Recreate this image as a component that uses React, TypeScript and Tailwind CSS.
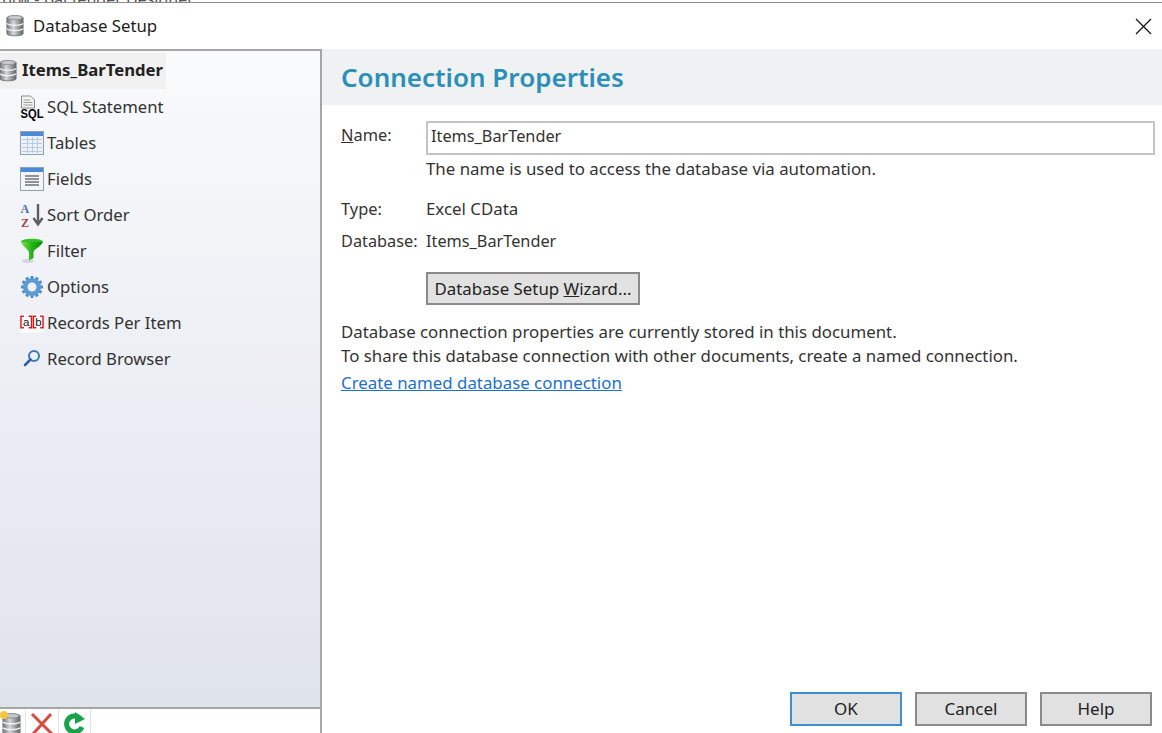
import { ReactNode } from "react";

function DbIcon({ size = 20 }: { size?: number }) {
  return (
    <svg width={size} height={size * 1.3} viewBox="0 0 20 26" preserveAspectRatio="none">
      <defs>
        <linearGradient id="db" x1="0" x2="1" y1="0" y2="0">
          <stop offset="0" stopColor="#6f7478" />
          <stop offset="0.4" stopColor="#d5d8da" />
          <stop offset="1" stopColor="#5f6468" />
        </linearGradient>
      </defs>
      <path d="M1 4c0-2.500 18-2.500 18 0v18c0 3-18 3-18 0z" fill="url(#db)" stroke="#74787c" />
      <ellipse cx="10" cy="4" rx="8" ry="2.400" fill="#c6c9cb" stroke="#8a8e92" />
      <path d="M1 10.500c3 2.600 15 2.600 18 0M1 16.500c3 2.600 15 2.600 18 0" fill="none" stroke="#f2f3f3" strokeWidth="1.500" />
    </svg>
  );
}

function SqlIcon() {
  return (
    <svg width="24" height="28" viewBox="0 0 24 28">
      <path d="M1.500 3h9l4 4v8h-13z" fill="#f4f4f4" stroke="#8b8b8b" />
      <path d="M3.500 7h7M3.500 9.500h9M3.500 12h9" stroke="#9a9a9a" />
      <text x="0.500" y="25" fontFamily="'Liberation Sans', sans-serif" fontWeight="700" fontSize="13" textLength="23" lengthAdjust="spacingAndGlyphs" fill="#000">SQL</text>
    </svg>
  );
}

function TableIcon() {
  return (
    <svg width="24" height="24" viewBox="0 0 24 24">
      <rect x="0.500" y="0.500" width="23" height="23" fill="#eef2f8" stroke="#8ea0b8" />
      <rect x="1" y="1" width="22" height="4" fill="#4d8ad6" />
      <path d="M2 8.500h20M2 12.500h20M2 16.500h20M2 20.500h20M7.500 6v16M12.500 6v16M17.500 6v16" stroke="#b7cbe4" />
    </svg>
  );
}

function FieldsIcon() {
  return (
    <svg width="24" height="24" viewBox="0 0 24 24">
      <rect x="0.500" y="0.500" width="23" height="23" fill="#f3f5f9" stroke="#8ea0b8" />
      <rect x="1" y="1" width="22" height="4" fill="#4d8ad6" />
      <path d="M5 9h14M5 12h14M5 15h14M5 18h14" stroke="#6c7078" strokeWidth="1.300" />
    </svg>
  );
}

function SortIcon() {
  return (
    <svg width="24" height="30" viewBox="0 0 24 30">
      <text x="0.500" y="13" fontFamily="'Liberation Serif', serif" fontWeight="700" fontSize="12" fill="#4a6fb5">A</text>
      <text x="1" y="27" fontFamily="'Liberation Serif', serif" fontWeight="700" fontSize="12" fill="#a8434a">Z</text>
      <path d="M18 4v20M13.500 18l4.500 6.500 4.500-6.500" fill="none" stroke="#5d5f63" strokeWidth="2.400" />
    </svg>
  );
}

function FilterIcon() {
  return (
    <svg width="24" height="26" viewBox="0 0 24 26">
      <defs>
        <linearGradient id="funnel" x1="0" x2="1" y1="0" y2="0">
          <stop offset="0" stopColor="#7fe04a" />
          <stop offset="0.5" stopColor="#22b316" />
          <stop offset="1" stopColor="#0c8a10" />
        </linearGradient>
      </defs>
      <ellipse cx="8" cy="23" rx="6" ry="2" fill="#d3d7de" />
      <ellipse cx="12" cy="3.500" rx="11" ry="2.800" fill="#35c025" />
      <path d="M1 4c3 6 7 7 8 10v8.500l4.500-2.500v-6c.5-3 6-4 9.500-10z" fill="url(#funnel)" />
    </svg>
  );
}

function GearIcon() {
  const teeth = [0, 30, 60, 90, 120, 150];
  return (
    <svg width="22" height="22" viewBox="0 0 22 22">
      {teeth.map((a) => (
        <rect key={a} x="9.500" y="0" width="3" height="22" fill="#4b8fcb" transform={`rotate(${a} 11 11)`} />
      ))}
      <circle cx="11" cy="11" r="9" fill="#5a9bd6" />
      <circle cx="11" cy="11" r="4.500" fill="#eef1f6" />
    </svg>
  );
}

function RecordsIcon() {
  return (
    <svg width="25" height="19" viewBox="0 0 25 19">
      <rect width="25" height="19" fill="#fff" />
      <path d="M4 2H1v12h3M9 2h3v12H9M17 2h-3v12h3M21 2h3v12h-3" fill="none" stroke="#e0141c" strokeWidth="1.500" />
      <text x="3.200" y="12" fontFamily="'Liberation Sans', sans-serif" fontSize="12" fill="#111">a</text>
      <text x="15.800" y="12" fontFamily="'Liberation Sans', sans-serif" fontSize="12" fill="#111">b</text>
    </svg>
  );
}

function SearchIcon() {
  return (
    <svg width="20" height="20" viewBox="0 0 20 20">
      <circle cx="12" cy="7" r="5" fill="#eaf2fb" stroke="#3f78b8" strokeWidth="2" />
      <path d="M8.500 10.500L3 16" stroke="#2e5f9e" strokeWidth="2.600" strokeLinecap="round" />
    </svg>
  );
}

const navItems: { label: string; icon: ReactNode }[] = [
  { label: "SQL Statement", icon: <SqlIcon /> },
  { label: "Tables", icon: <TableIcon /> },
  { label: "Fields", icon: <FieldsIcon /> },
  { label: "Sort Order", icon: <SortIcon /> },
  { label: "Filter", icon: <FilterIcon /> },
  { label: "Options", icon: <GearIcon /> },
  { label: "Records Per Item", icon: <RecordsIcon /> },
  { label: "Record Browser", icon: <SearchIcon /> },
];

function DialogButton({ children, focused }: { children: ReactNode; focused?: boolean }) {
  return (
    <button
      className={
        focused
          ? "w-[112px] h-[34px] bg-[#e1e1e1] border-2 border-[#3c8fd0] text-[#222] text-[17px]"
          : "w-[112px] h-[34px] bg-[#e1e1e1] border-2 border-[#8a8a8a] text-[#222] text-[17px]"
      }
    >
      {children}
    </button>
  );
}

export default function App() {
  return (
    <div className="w-[1162px] h-[733px] overflow-hidden bg-white flex flex-col font-['Noto_Sans',sans-serif] text-[#222]">
      {/* window behind the dialog, only the tops of its title show */}
      <div className="h-[3px] shrink-0 overflow-hidden border-b border-[#8c8c8c] bg-white">
        <div className="-mt-[13px] pl-[2px] text-[16px] leading-[24px] text-[#555] whitespace-nowrap">btw - BarTender Designer</div>
      </div>

      <div className="h-[46px] shrink-0 flex items-center pl-[6px] pr-[10px]">
        <DbIcon size={18} />
        <span className="ml-[9px] text-[16.800px] text-[#1c1c1c]">Database Setup</span>
        <svg className="ml-auto" width="17" height="17" viewBox="0 0 17 17">
          <path d="M1 1l15 15M16 1L1 16" stroke="#111" strokeWidth="1.200" />
        </svg>
      </div>

      <div className="flex-1 flex min-h-0">
        {/* left nav */}
        <div className="w-[322px] shrink-0 flex flex-col border-r-2 border-t-2 border-[#a6a6a6]">
          <div className="flex-1 bg-gradient-to-b from-[#f9fafc] to-[#dfe3ec] pt-[2px]">
            <div className="w-[166px] h-[36px] bg-[#f1f1f1] flex items-center font-bold text-[16.700px] text-[#222] whitespace-nowrap">
              <span className="-ml-[1px] flex"><DbIcon size={18} /></span>
              <span className="ml-[5px] -mt-[2px]">Items_BarTender</span>
            </div>
            {navItems.map((item) => (
              <div key={item.label} className="h-[36px] flex items-center pl-[20px] whitespace-nowrap">
                <span className="w-[24px] flex justify-center shrink-0">{item.icon}</span>
                <span className="ml-[3px] text-[16.700px] text-[#333]">{item.label}</span>
              </div>
            ))}
          </div>
          <div className="h-[26px] shrink-0 border-t-2 border-[#a6a6a6] bg-white flex items-start overflow-hidden">
            <div className="w-[26px] h-[26px] relative border-r border-[#e4e4e4] overflow-hidden shrink-0">
              <span className="absolute left-[2px] top-[3px]"><DbIcon size={19} /></span>
              <span className="absolute left-0 top-[2px] w-[8px] h-[8px] rounded-full bg-[#f5c542]"></span>
            </div>
            <div className="w-[33px] h-[26px] flex justify-center pt-[3px] border-r border-[#e4e4e4] shrink-0">
              <svg width="24" height="24" viewBox="0 0 24 24">
                <path d="M2 2l20 20M21 2L3 22" stroke="#d94b3f" strokeWidth="3" />
              </svg>
            </div>
            <div className="w-[32px] h-[26px] flex justify-center pt-[3px] border-r border-[#e4e4e4] shrink-0">
              <svg width="24" height="24" viewBox="0 0 24 24">
                <path d="M19 15a8 8 0 1 1-2-9" fill="none" stroke="#16a34a" strokeWidth="5" />
                <path d="M12 0l10 7-10 5z" fill="#16a34a" />
              </svg>
            </div>
          </div>
        </div>

        {/* right pane */}
        <div className="flex-1 flex flex-col min-w-0">
          <div className="h-[56px] shrink-0 bg-[#f0f1f3] flex items-center pl-[19px]">
            <h1 className="text-[26px] font-semibold text-[#2b90b8] mt-[1px]">Connection Properties</h1>
          </div>

          <div className="flex-1 flex flex-col pl-[19px] pr-[7px] text-[16.850px] text-[#333]">
            <div className="flex mt-[16px]">
              <span className="w-[85px] shrink-0 pt-[1px] leading-[26px] text-[16.400px]">
                <span className="underline">N</span>ame:
              </span>
              <div className="flex-1 h-[34px] border-2 border-[#c4c4c4] flex items-center pl-[3px] pb-[4px] text-[16.300px]">Items_BarTender</div>
            </div>
            <div className="ml-[85px] mt-[2px] h-[24px] leading-[24px]">The name is used to access the database via automation.</div>
            <div className="flex mt-[16px] h-[24px] leading-[24px]">
              <span className="w-[85px] shrink-0 text-[16.400px]">Type:</span>
              <span>Excel CData</span>
            </div>
            <div className="flex mt-[8px] h-[24px] leading-[24px] text-[16.300px]">
              <span className="w-[85px] shrink-0 whitespace-nowrap">Database:</span>
              <span>Items_BarTender</span>
            </div>
            <button className="ml-[85px] mt-[19px] w-[214px] h-[33px] bg-[#e1e1e1] border-2 border-[#8a8a8a] text-[16.850px] text-[#222]">
              Database Setup <span className="underline">W</span>izard...
            </button>
            <p className="mt-[15px] leading-[24px]">
              Database connection properties are currently stored in this document.
              <br />
              To share this database connection with other documents, create a named connection.
            </p>
            <a className="mt-[3px] leading-[24px] underline text-[#1c6fd0]">Create named database connection</a>

            <div className="mt-auto mb-[7px] flex justify-end gap-[13px] pr-[3px]">
              <DialogButton focused>OK</DialogButton>
              <DialogButton>Cancel</DialogButton>
              <DialogButton>Help</DialogButton>
            </div>
          </div>
        </div>
      </div>
    </div>
  );
}
